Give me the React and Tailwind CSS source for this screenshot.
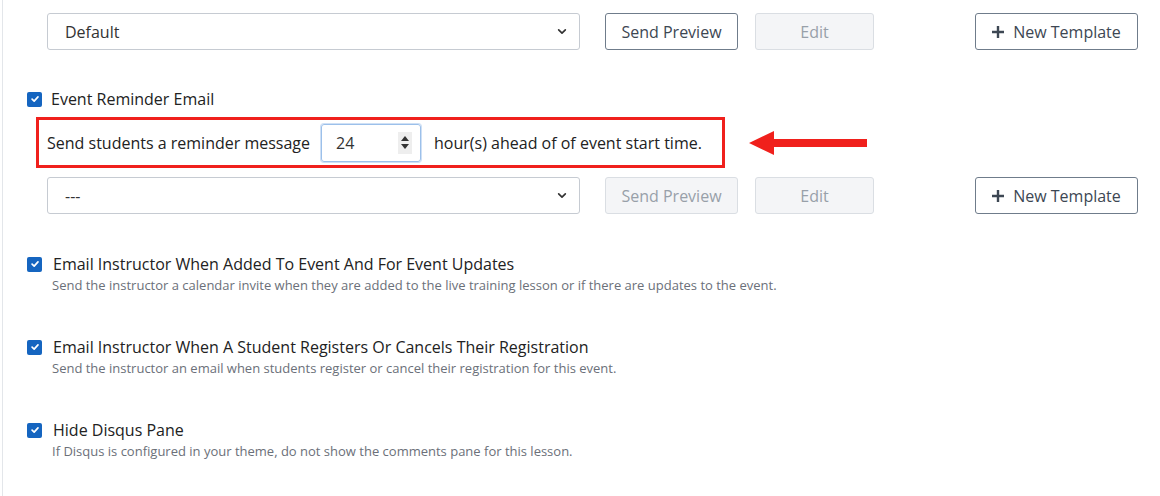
import React from "react";

function Check() {
  return (
    <span className="flex h-[15px] w-[15px] shrink-0 items-center justify-center rounded-[2px] bg-[#1565c0]">
      <svg viewBox="0 0 12 12" className="h-[10px] w-[10px]" fill="none" stroke="#fff" strokeWidth="2" strokeLinecap="round" strokeLinejoin="round">
        <path d="M2.5 6.2 5 8.6 9.6 3.4" />
      </svg>
    </span>
  );
}

function Chevron() {
  return (
    <svg viewBox="0 0 12 8" className="h-[7px] w-[10px]" fill="none" stroke="#333" strokeWidth="2" strokeLinecap="round" strokeLinejoin="round">
      <path d="M2 2l4 4 4-4" />
    </svg>
  );
}

function TemplateRow({ value, disabledPreview }) {
  return (
    <div className="flex items-center pl-[44px]">
      <div className="flex h-[37px] w-[533px] items-center justify-between rounded-[3px] border border-[#c6cbd2] bg-white pl-[17px] pr-[12px] text-[16px] text-[#333]">
        <span>{value}</span>
        <Chevron />
      </div>
      <button
        type="button"
        className={`ml-[25px] h-[37px] w-[133px] rounded-[3px] border text-[16px] ${
          disabledPreview
            ? "border-[#dadee3] bg-[#f4f5f7] text-[#98a0a9]"
            : "border-[#6f7c8b] bg-white text-[#3d4753]"
        }`}
      >
        Send Preview
      </button>
      <button
        type="button"
        className="ml-[17px] h-[37px] w-[119px] rounded-[3px] border border-[#dadee3] bg-[#f4f5f7] text-[16px] text-[#98a0a9]"
      >
        Edit
      </button>
      <button
        type="button"
        className="ml-[101px] flex h-[37px] w-[163px] items-center justify-center gap-[9px] rounded-[3px] border border-[#6f7c8b] bg-white text-[16px] text-[#3d4753]"
      >
        <svg viewBox="0 0 12 12" className="h-[12px] w-[12px]" stroke="#3d4753" strokeWidth="2.4">
          <path d="M6 0v12M0 6h12" />
        </svg>
        New Template
      </button>
    </div>
  );
}

function Option({ title, desc }) {
  return (
    <div className="pl-[24px]">
      <div className="flex items-center gap-[11px]">
        <Check />
        <span className="text-[16px] text-[#222]">{title}</span>
      </div>
      <div className="pl-[25px] text-[13px] leading-[18px] text-[#6b7079]">{desc}</div>
    </div>
  );
}

export default function App() {
  return (
    <div
      className="h-[496px] w-[1160px] overflow-hidden bg-white"
      style={{ fontFamily: "'Open Sans', 'Liberation Sans', sans-serif" }}
    >
      <div className="ml-[2px] h-full border-l border-[#e3e6ea] pt-[13px]">
        <TemplateRow value="Default" />

        <div className="mt-[37px] flex items-center gap-[9px] pl-[24px]">
          <Check />
          <span className="text-[16px] text-[#222]">Event Reminder Email</span>
        </div>

        <div className="mt-[6px] flex items-center">
          <div className="ml-[33px] flex h-[51px] w-[689px] items-center border-[3px] border-[#f0201c] pl-[8px] text-[16px] text-[#222]">
            <span>Send students a reminder message</span>
            <div className="ml-[11px] flex h-[38px] w-[100px] items-center justify-between rounded-[3px] border border-[#9cc0ea] pl-[14px] pr-[8px] shadow-[0_0_0_1px_#cfe0f5]">
              <span className="text-[#333]">24</span>
              <span className="flex h-[22px] w-[14px] flex-col items-center justify-center gap-[3px] bg-[#eeeeee]">
                <svg viewBox="0 0 8 5" className="h-[5px] w-[8px]" fill="#333"><path d="M4 0l4 5H0z" /></svg>
                <svg viewBox="0 0 8 5" className="h-[5px] w-[8px]" fill="#333"><path d="M0 0h8L4 5z" /></svg>
              </span>
            </div>
            <span className="ml-[13px]">hour(s) ahead of of event start time.</span>
          </div>
          <svg viewBox="0 0 120 26" className="ml-[24px] h-[26px] w-[120px]">
            <path d="M0 13 25 1v8h93v8H25v8z" fill="#f0201c" />
          </svg>
        </div>

        <div className="mt-[9px]">
          <TemplateRow value="---" disabledPreview />
        </div>

        <div className="mt-[38px] flex flex-col gap-[41px]">
          <Option
            title="Email Instructor When Added To Event And For Event Updates"
            desc="Send the instructor a calendar invite when they are added to the live training lesson or if there are updates to the event."
          />
          <Option
            title="Email Instructor When A Student Registers Or Cancels Their Registration"
            desc="Send the instructor an email when students register or cancel their registration for this event."
          />
          <Option
            title="Hide Disqus Pane"
            desc="If Disqus is configured in your theme, do not show the comments pane for this lesson."
          />
        </div>
      </div>
    </div>
  );
}
